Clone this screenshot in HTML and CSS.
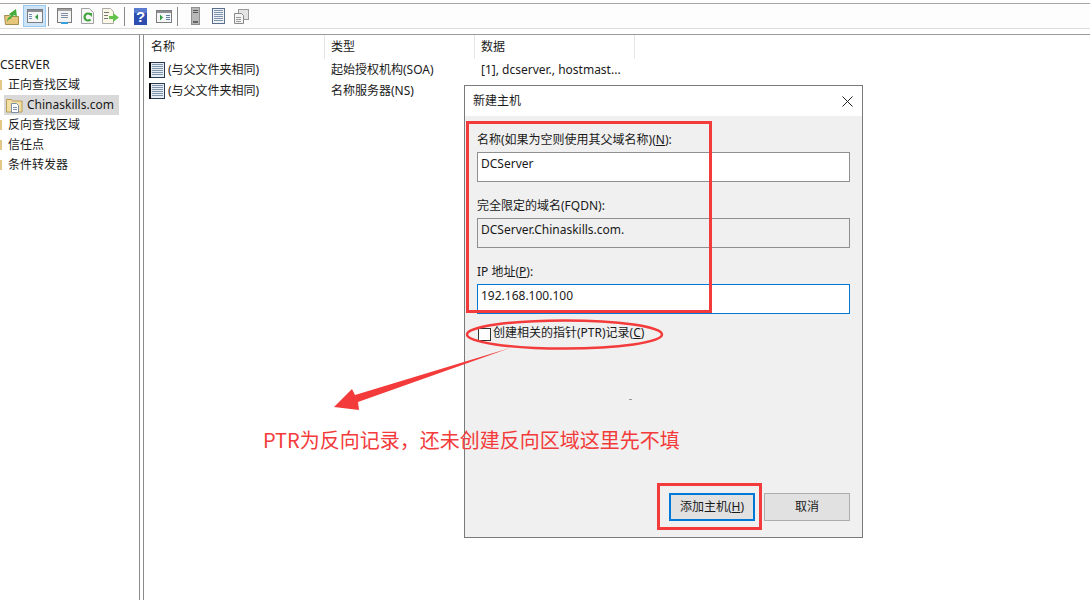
FILE: index.html
```html
<!DOCTYPE html>
<html lang="zh">
<head>
<meta charset="utf-8">
<title>新建主机</title>
<link rel="stylesheet" href="styles.css">
</head>
<body>
<div class="app">
  <div class="toolbar">
    <span class="tb"><svg width="15" height="17" viewBox="0 0 15 17"><path d="M.5 7.500h5l1 1h8v8h-13z" fill="#e6c67a" stroke="#a58c52"/><path d="M3 14c0-3 1-5 4-6L5 6l7-5 1 8-2.500-2c-2 1-3 2-3.500 4-2-.5-3 1-4 3z" fill="#45ad3d"/></svg></span>
    <span class="tb tb-on"><svg width="16" height="14" viewBox="0 0 16 14"><rect x=".5" y=".5" width="15" height="13" fill="#f6f6f6" stroke="#7b7d80"/><rect x="1" y="1" width="14" height="2" fill="#8b8f94"/><path d="M2 5.500h3M2 7.500h3M2 9.500h3" stroke="#6f8fb3"/><path d="M11 5v6L8 8z" fill="#2f9b45"/></svg></span>
    <span class="sep"></span>
    <span class="tb"><svg width="15" height="16" viewBox="0 0 15 16"><rect x=".5" y=".5" width="14" height="14" fill="#f3f3f3" stroke="#7c7c7c"/><rect x="1" y="1" width="13" height="2" fill="#a2a2a2"/><path d="M4 5.500h7M4 7.500h7M4 9.500h7" stroke="#7f90a6"/><rect x="4" y="14" width="7" height="2" fill="#35a0dc"/></svg></span>
    <span class="tb"><svg width="13" height="16" viewBox="0 0 13 16"><path d="M.5.500h8l4 4v11H.5z" fill="#f6f6f6" stroke="#a2a2a2"/><path d="M9.500 6.500a3.500 3.500 0 1 0 0 5" fill="none" stroke="#3fa33a" stroke-width="2.200"/><path d="M7 5h4v4z" fill="#3fa33a"/></svg></span>
    <span class="tb"><svg width="17" height="16" viewBox="0 0 17 16"><path d="M.5.500h8l3 3v12H.5z" fill="#fbf7e6" stroke="#aaa"/><path d="M2 4.500h5M2 7.500h4M2 10.500h4" stroke="#777"/><path d="M7 8h4V5l6 4.500-6 4.500v-3H7z" fill="#62c24c"/></svg></span>
    <span class="sep"></span>
    <span class="tb"><svg width="13" height="17" viewBox="0 0 13 17"><rect width="13" height="17" fill="#2f4fb0"/><rect width="13" height="5" fill="#5a7ad0"/><text class="help" x="6.500" y="14">?</text></svg></span>
    <span class="tb"><svg width="16" height="13" viewBox="0 0 16 13"><rect x=".5" y=".5" width="15" height="12" fill="#f6f6f6" stroke="#7b7d80"/><rect x="1" y="1" width="14" height="2" fill="#8b8f94"/><path d="M4 4.500v6l3-3z" fill="#2f9b45"/><path d="M10 5.500h4M10 7.500h4M10 9.500h4" stroke="#5b7fa8"/></svg></span>
    <span class="sep sep-wide"></span>
    <span class="tb"><svg width="9" height="18" viewBox="0 0 9 18"><rect width="9" height="18" fill="#8f8f8f"/><rect x="1" y="1" width="7" height="16" fill="#b8b8b8"/><path d="M2 3.500h5M2 5.500h5" stroke="#555"/><rect x="2" y="14" width="5" height="2" fill="#666"/></svg></span>
    <span class="tb"><svg width="13" height="16" viewBox="0 0 13 16"><rect x=".5" y=".5" width="12" height="15" fill="#eef2f7" stroke="#5a6f8c"/><path d="M2 2.500h9M2 4.500h9M2 6.500h9M2 8.500h9M2 10.500h9M2 12.500h9" stroke="#7f93ab"/></svg></span>
    <span class="tb"><svg width="15" height="15" viewBox="0 0 15 15"><rect x="4.500" y=".5" width="10" height="10" fill="#e4e4e4" stroke="#9a9a9a"/><path d="M.5 4.500h7l2 2v8h-9z" fill="#f4f4f4" stroke="#8a8a8a"/><path d="M2 8.500h5M2 10.500h5M2 12.500h5" stroke="#999"/></svg></span>
  </div>
  <div class="panes">
    <nav class="tree">
      <div class="node node-root">CSERVER</div>
      <div class="node"><i class="sliver"></i>正向查找区域</div>
      <div class="node node-selected">
        <svg class="folder" width="17" height="15" viewBox="0 0 17 15"><path d="M.5 3V1.500h5l1 1.500h9.500v11H.5z" fill="#f3dfa2" stroke="#b99c57"/><path d="M5.500 5.500h5l2 2v7h-7z" fill="#fff" stroke="#7c8ea8"/><path d="M7 9.500h4M7 11.500h4" stroke="#7c8ea8"/></svg>
        Chinaskills.com
      </div>
      <div class="node"><i class="sliver"></i>反向查找区域</div>
      <div class="node"><i class="sliver"></i>信任点</div>
      <div class="node"><i class="sliver"></i>条件转发器</div>
    </nav>
    <main class="list">
      <div class="row head">
        <div class="col col-name">名称</div>
        <div class="col col-type">类型</div>
        <div class="col col-data">数据</div>
      </div>
      <div class="row item">
        <div class="col col-name"><svg class="rec" width="16" height="16" viewBox="0 0 16 16"><rect x=".5" y=".5" width="15" height="15" fill="#e6edf5" stroke="#2a3a50"/><path d="M1 0v16" stroke="#000" stroke-width="2"/><path d="M3 2.500h11M3 4.500h11M3 6.500h11M3 8.500h11M3 10.500h11M3 12.500h11" stroke="#7f93ab"/></svg>(与父文件夹相同)</div>
        <div class="col col-type">起始授权机构(SOA)</div>
        <div class="col col-data">[1], dcserver., hostmast...</div>
      </div>
      <div class="row item">
        <div class="col col-name"><svg class="rec" width="16" height="16" viewBox="0 0 16 16"><rect x=".5" y=".5" width="15" height="15" fill="#e6edf5" stroke="#2a3a50"/><path d="M1 0v16" stroke="#000" stroke-width="2"/><path d="M3 2.500h11M3 4.500h11M3 6.500h11M3 8.500h11M3 10.500h11M3 12.500h11" stroke="#7f93ab"/></svg>(与父文件夹相同)</div>
        <div class="col col-type">名称服务器(NS)</div>
        <div class="col col-data"></div>
      </div>
    </main>
  </div>

  <section class="dialog">
    <header class="dlg-title">
      <span>新建主机</span>
      <svg width="11" height="11" viewBox="0 0 11 11"><path d="M.5.500l10 10M10.500.500l-10 10" stroke="#222" fill="none"/></svg>
    </header>
    <div class="dlg-body">
      <label class="lbl lbl-first">名称(如果为空则使用其父域名称)(<u>N</u>):</label>
      <div class="field">DCServer</div>
      <label class="lbl lbl-fqdn">完全限定的域名(FQDN):</label>
      <div class="field field-ro">DCServer.Chinaskills.com.</div>
      <label class="lbl lbl-ip">IP 地址(<u>P</u>):</label>
      <div class="field field-focus">192.168.100.100</div>
      <div class="check"><span class="box"></span>创建相关的指针(PTR)记录(<u>C</u>)</div>
      <div class="dash"></div>
      <div class="actions">
        <button class="btn btn-primary">添加主机(<u>H</u>)</button>
        <button class="btn">取消</button>
      </div>
    </div>
  </section>

  <div class="mark mark-form"></div>
  <div class="mark mark-btn"></div>
  <svg class="overlay" width="1090" height="600" viewBox="0 0 1090 600">
    <ellipse cx="564.500" cy="334.500" rx="97.500" ry="14" fill="none" stroke="#f33b3b" stroke-width="2.500"/>
    <path d="M510 348L358 402 359 410 334 407 352 389 355 395z" fill="#f33b3b"/>
  </svg>
  <p class="note">PTR为反向记录，还未创建反向区域这里先不填</p>
</div>
</body>
</html>
```
FILE: styles.css
```css
* { box-sizing: border-box; }
html, body { margin: 0; padding: 0; background: #fff; }
body { font-family: "Noto Sans", "Noto Sans CJK SC", sans-serif; font-size: 12px; color: #1a1a1a; }
.app { position: relative; width: 1090px; height: 600px; overflow: hidden; display: flex; flex-direction: column; }

.toolbar { height: 24px; margin-top: 3px; border-top: 1px solid #a6a6a6; border-bottom: 1px solid #dcdcdc; background: #fdfdfd; display: flex; align-items: center; flex: none; box-sizing: content-box; }
.tb { width: 23px; height: 22px; display: flex; align-items: center; justify-content: center; }
.tb-on { background: #cce4f7; border: 1px solid #99c9ef; }
.sep { width: 1px; height: 19px; background: #8a8a8a; margin: 0 4px 0 2px; flex: none; }
.sep-wide { margin-right: 6px; }
.help { font: bold 15px "Liberation Sans", sans-serif; fill: #fff; text-anchor: middle; }

.panes { flex: 1; display: flex; margin-top: 5px; min-height: 0; border-top: 1px solid #9a9a9a; }
.tree { width: 140px; border-right: 1px solid #8c8c8c; padding-top: 20px; flex: none; }
.node { height: 20px; line-height: 19px; font-size: 12px; padding-left: 8px; position: relative; white-space: nowrap; }
.node-root { padding-left: 0; }
.sliver { position: absolute; left: 0; top: 5px; width: 2px; height: 10px; background: #e3c987; }
.node-selected { background: #d9d9d9; margin-left: 4px; width: 115px; padding-left: 23px; }
.folder { position: absolute; left: 2px; top: 3px; }

.list { flex: 1; margin-left: 3px; border-left: 1px solid #8c8c8c; }
.row { display: flex; }
.head { height: 24px; line-height: 24px; }
.item { height: 21px; line-height: 21px; }
.head .col { border-right: 1px solid #e5e5e5; }
.col { white-space: nowrap; padding-left: 6px; flex: none; overflow: hidden; }
.head .col-name { padding-left: 7px; }
.col-name { width: 181px; }
.col-type { width: 150px; }
.col-data { width: 160px; }
.item .col-name { padding-left: 5px; display: flex; align-items: center; gap: 3px; }
.rec { flex: none; }

.dialog { position: absolute; left: 464px; top: 85px; width: 399px; height: 453px; border: 1px solid #7a7a7a; background: #f0f0f0; display: flex; flex-direction: column; }
.dlg-title { height: 30px; background: #fff; display: flex; align-items: center; justify-content: space-between; padding: 0 9px 2px 8px; flex: none; }
.dlg-title svg { margin-top: 2px; }
.dlg-body { flex: 1; padding: 0 12px 16px; display: flex; flex-direction: column; }
.lbl { display: block; height: 18px; line-height: 18px; }
.lbl-first { margin-top: 15px; }
.lbl-fqdn { margin-top: 15px; }
.lbl-ip { margin-top: 15px; }
.field { height: 30px; border: 1px solid #8f8f8f; background: #fff; padding: 1px 3px 0; line-height: 20px; margin-top: 3px; }
.field-ro { background: #f0f0f0; }
.field-focus { border-color: #0078d7; }
.check { display: flex; align-items: center; height: 18px; margin-top: 10px; line-height: 18px; }
.box { width: 13px; height: 13px; border: 1px solid #333; background: #fff; margin: 2px 2px 0 1px; flex: none; }
.dash { width: 3px; height: 1px; background: #999; margin: 57px 0 0 152px; }
.actions { margin-top: auto; display: flex; justify-content: flex-end; gap: 9px; }
.btn { width: 86px; height: 28px; border: 1px solid #adadad; background: #e1e1e1; font: inherit; color: inherit; padding: 0 0 2px; }
.btn-primary { border: 2px solid #0078d7; }

.mark { position: absolute; border: 3px solid #f33b3b; }
.mark-form { left: 466px; top: 121px; width: 246px; height: 192px; }
.mark-btn { left: 657px; top: 483px; width: 105px; height: 47px; }
.overlay { position: absolute; left: 0; top: 0; pointer-events: none; }
.note { position: absolute; left: 263px; top: 425px; margin: 0; font-family: "Noto Sans CJK SC", sans-serif; font-size: 20px; line-height: 29px; color: #f33b3b; white-space: nowrap; }
```
